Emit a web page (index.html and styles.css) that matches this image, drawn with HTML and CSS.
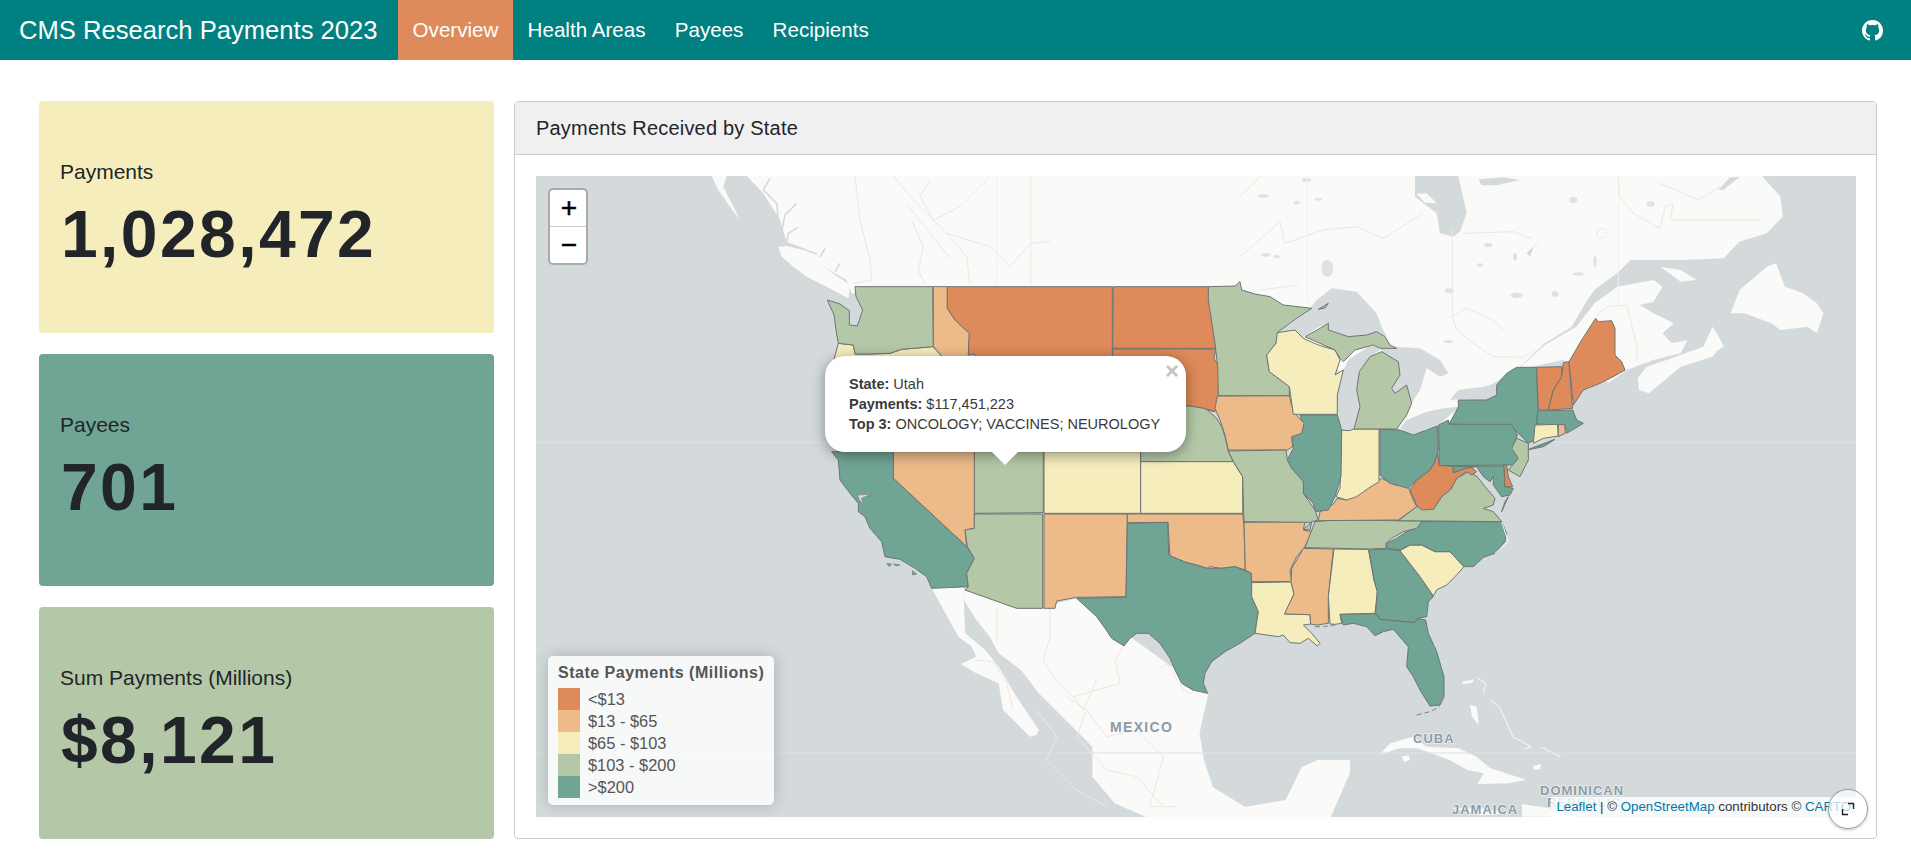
FILE: index.html
```html
<!DOCTYPE html>
<html lang="en">
    <head>
        <meta charset="UTF-8">
        <title>CMS Research Payments 2023</title>
        <link rel="stylesheet" href="styles.css">
    </head>
    <body>
        <nav class="navbar">
            <a class="brand" href="#">CMS Research Payments 2023</a>
            <a class="nav-link active" href="#">Overview</a>
            <a class="nav-link" href="#">Health Areas</a>
            <a class="nav-link" href="#">Payees</a>
            <a class="nav-link" href="#">Recipients</a>
            <a class="github" href="#" aria-label="GitHub">
                <svg viewBox="0 0 16 16" width="21" height="21"><path d="M8 0C3.58 0 0 3.58 0 8c0 3.54 2.29 6.53 5.47 7.59.4.07.55-.17.55-.38 0-.19-.01-.82-.01-1.49-2.01.37-2.53-.49-2.69-.94-.09-.23-.48-.94-.82-1.13-.28-.15-.68-.52-.01-.53.63-.01 1.08.58 1.23.82.72 1.21 1.87.87 2.33.66.07-.52.28-.87.51-1.07-1.78-.2-3.64-.89-3.64-3.95 0-.87.31-1.59.82-2.15-.08-.2-.36-1.02.08-2.12 0 0 .67-.21 2.2.82.64-.18 1.32-.27 2-.27.68 0 1.36.09 2 .27 1.53-1.04 2.2-.82 2.2-.82.44 1.1.16 1.92.08 2.12.51.56.82 1.27.82 2.15 0 3.07-1.87 3.75-3.65 3.95.29.25.54.73.54 1.48 0 1.07-.01 1.93-.01 2.2 0 .21.15.46.55.38A8.013 8.013 0 0016 8c0-4.42-3.58-8-8-8z"/></svg>
            </a>
        </nav>

        <main class="page">
            <section class="boxes">
                <div class="value-box box-yellow">
                    <p class="box-label">Payments</p>
                    <p class="box-value">1,028,472</p>
                </div>
                <div class="value-box box-teal">
                    <p class="box-label">Payees</p>
                    <p class="box-value">701</p>
                </div>
                <div class="value-box box-green">
                    <p class="box-label">Sum Payments (Millions)</p>
                    <p class="box-value">$8,121</p>
                </div>
            </section>

            <section class="card">
                <header class="card-header">Payments Received by State</header>
                <div class="card-body">
                    <div class="map">
                        <!-- all map coordinates are 3x page pixels -->
                        <svg class="map-svg" viewBox="1608 528 3960 1923" preserveAspectRatio="none">
                            <!-- land -->
                            <polygon class="land" points="2240,528 2290,580 2340,660 2360,725 2450,760 2470,800 2540,840 2555,880 3700,880 3900,1000 4200,1290 4330,1290 4400,1200 4560,1100 4566,1095 4634,1030 4715,980 4756,910 4783,870 4851,820 4892,780 5042,780 5171,775 5218,725 5300,700 5348,650 5341,590 5286,528"/>
                            <g transform="translate(1590,510)">
                                <polygon class="land" points="545,18 590,18 580,50 600,90 630,150 600,110 565,60"/>
                                <polygon class="land" points="745,230 770,228 820,240 870,258 880,290 960,345 955,385 890,350 830,320 790,290 755,260"/>
                                <polyline class="inlet" points="655,40 690,75"/>
                                <polyline class="inlet" points="720,25 700,60 740,100 745,150"/>
                                <polyline class="inlet" points="800,100 765,135 755,185"/>
                                <polyline class="inlet" points="805,172 775,190 770,215"/>
                                <polyline class="inlet" points="885,235 870,262"/>
                                <polyline class="inlet" points="930,280 915,305"/>
                            </g>
                            <g transform="translate(3600,510) scale(1.3605,1)">
                                <polygon class="land" points="700,600 760,525 830,470 870,400 920,350 1000,330 1020,350 1000,395 970,405 1000,430 1045,460 1020,490 1040,520 1075,510 1060,550 1000,570 960,590 940,600 900,640 880,600 800,570"/>
                                <polygon class="land" points="965,625 985,590 1040,565 1110,530 1150,525 1130,560 1060,590 990,670 968,660"/>
                                <polygon class="land" points="1110,530 1130,470 1140,490 1155,530 1130,550"/>
                                <polygon class="land" points="1015,290 1060,300 1095,330 1060,335"/>
                                <polygon class="land" points="1170,430 1190,360 1250,290 1270,280 1290,350 1330,370 1360,400 1375,430 1360,490 1340,470 1280,480 1260,460 1200,430"/>
                            </g>
                            <g transform="translate(1590,1320) scale(1.339,1)">
                                <polygon class="land" points="972,450 1090,505 1150,505 1180,490 1225,475 1520,760 1500,880 1510,960 1530,1041 1602,1101 1693,1080 1729,981 1765,960 1837,960 1837,999 1794,1131 1380,1131 1310,1090 1260,1010 1260,920 1140,760 1100,690 1050,640 1030,590 1000,540 972,480"/>
                                <polygon class="land" points="900,445 972,440 972,480 975,580 1020,630 1050,680 1085,760 1110,810 1140,870 1135,885 1120,890 1060,810 1050,730 1000,700 965,672 1000,650 990,620 960,590 935,530"/>
                            </g>
                            <g transform="translate(3600,1680) scale(1.3605,1)">
                                <polygon class="land" points="395,585 420,550 470,530 500,560 570,565 610,590 640,625 720,660 680,670 612,672 625,640 590,630 550,600 480,565 440,565"/>
                                <polygon class="land" points="445,590 460,585 463,600 450,605"/>
                                <polygon class="land" points="595,435 610,440 615,495 600,470"/>
                                <polygon class="land" points="578,365 605,358 600,368 580,372"/>
                                <polygon class="land" points="735,618 752,612 750,628 735,628"/>
                                <polygon class="land" points="555,745 620,745 685,760 620,766"/>
                                <polygon class="land" points="710,732 770,745 830,770 710,770"/>
                                <polyline class="reef" points="610,352 630,370 625,400"/>
                                <polyline class="reef" points="640,420 660,440 690,530 730,560 715,568"/>
                                <polyline class="reef" points="750,560 795,590"/>
                            </g>

                            <!-- tile seams -->
                            <line class="seam" x1="1608" y1="1326" x2="5568" y2="1326"/>
                            <line class="seam" x1="1608" y1="2259" x2="5568" y2="2259"/>

                            <!-- water on land -->
                            <g transform="translate(3720,510)">
                                <polygon class="water" points="525,18 655,18 680,130 660,185 640,200 600,190 590,130 525,80"/>
                                <polygon class="land" points="530,72 560,70 590,100 555,98"/>
                                <ellipse class="pond" cx="262" cy="295" rx="18" ry="26"/>
                                <polygon class="water" points="860,250 915,195 880,232 870,260"/>
                                <ellipse class="pond" cx="830" cy="376" rx="18" ry="8"/>
                                <ellipse class="pond" cx="628" cy="362" rx="14" ry="7"/>
                                <polygon class="water" points="715,28 790,22 840,30 770,46 725,46"/>
                                <ellipse class="pond" cx="1232" cy="102" rx="12" ry="8"/>
                                <polygon class="water" points="1435,60 1470,22 1500,20 1450,60"/>
                                <ellipse class="pond" cx="78" cy="255" rx="14" ry="5"/>
                                <ellipse class="pond" cx="110" cy="260" rx="10" ry="5"/>
                                <ellipse class="pond" cx="170" cy="98" rx="10" ry="5"/>
                                <ellipse class="pond" cx="235" cy="88" rx="12" ry="4"/>
                                <ellipse class="pond" cx="200" cy="30" rx="14" ry="6"/>
                                <ellipse class="pond" cx="70" cy="78" rx="16" ry="5"/>
                                <ellipse class="pond" cx="945" cy="372" rx="10" ry="9"/>
                                <ellipse class="pond" cx="745" cy="225" rx="12" ry="6"/>
                                <ellipse class="pond" cx="720" cy="285" rx="10" ry="5"/>
                                <ellipse class="pond" cx="825" cy="260" rx="6" ry="12"/>
                                <ellipse class="pond" cx="1065" cy="275" rx="5" ry="18"/>
                                <ellipse class="pond" cx="1015" cy="312" rx="16" ry="5"/>
                                <ellipse class="pond" cx="1000" cy="90" rx="12" ry="10"/>
                                <ellipse class="pond" cx="625" cy="515" rx="14" ry="4"/>
                                <circle class="ring" cx="1085" cy="190" r="15"/>
                                <polyline class="river" points="0,260 120,155 135,220 250,180 350,170 430,205 550,130"/>
                                <polyline class="river" points="670,190 820,185 875,205"/>
                                <polyline class="river" points="1255,40 1310,60 1375,90 1440,50"/>
                                <polyline class="river" points="60,360 175,345"/>
                                <polyline class="border" points="0,80 62,18"/>
                                <polyline class="faint" points="202,18 202,400"/>
                                <polyline class="faint" points="1135,18 1135,420"/>
                                <polyline class="border" points="637,180 637,440 650,480 700,520 760,560 850,562 885,540"/>
                                <polyline class="border" points="1135,18 1140,80 1180,130 1260,175 1275,110 1300,100 1290,150 1560,150"/>
                                <polyline class="border" points="1060,445 1100,410 1160,405 1190,525 1190,575"/>
                                <polyline class="river" points="635,440 680,415 760,450 790,480"/>
                            </g>
                            <g transform="translate(1590,510)">
                                <polyline class="river" points="975,18 990,150 1020,270 1025,330 970,340"/>
                                <polyline class="border" points="1090,18 1150,90 1250,190 1310,260 1320,345"/>
                                <polyline class="river" points="1130,100 1260,265"/>
                                <polyline class="river" points="1145,150 1180,230 1165,300 1185,345"/>
                                <polyline class="river" points="1200,30 1170,80 1210,150 1290,110 1380,20"/>
                                <polyline class="river" points="1250,190 1380,230 1440,290 1500,220 1560,215"/>
                                <polyline class="faint" points="1400,18 1400,345"/>
                                <polyline class="border" points="1502,18 1502,345"/>
                            </g>
                            <g transform="translate(3600,840)">
                                <polygon class="water" points="240,155 330,85 350,60 395,25 470,35 530,100 545,140 560,170 530,155 500,165 445,170 385,150 385,130 350,145 310,170 285,150"/>
                                <polygon class="water" points="410,345 430,270 445,240 505,200 530,195 540,210 510,230 478,275 470,330 480,380 460,430 440,450 425,450 412,400"/>
                                <polygon class="water" points="540,205 590,200 660,205 720,240 745,280 720,290 680,265 660,330 635,370 620,315 585,340 575,325 600,285 595,245 545,215"/>
                                <polygon class="water" points="600,445 635,460 712,438 780,380 730,385 680,395 620,420"/>
                                <polygon class="water" points="750,360 775,330 850,320 890,310 890,345 860,360 775,358"/>
                            </g>
                            <g transform="translate(2460,1410)">
                                <polyline class="border" points="690,415 690,500 670,570 700,620 760,680 900,640 885,570 910,528"/>
                                <polyline class="border" points="530,415 530,520"/>
                                <polyline class="border" points="465,570 520,575 560,640 580,720"/>
                                <polyline class="border" points="760,680 790,720 830,630"/>
                                <polyline class="border" points="1015,600 1040,580 1090,660 1115,670"/>
                            </g>
                            <g transform="translate(3200,1950)">
                                <polyline class="border" points="0,140 60,180 120,260 210,240 290,320 250,470 330,470"/>
                                <polyline class="border" points="60,180 30,260 120,360 210,380 290,470"/>
                                <polyline class="border" points="-90,180 -30,260 -60,330 30,420 120,470"/>
                            </g>

                            <!-- west -->
                            <g transform="translate(2460,840)">
                                <polygon class="st c3" points="55,190 100,195 105,222 150,222 210,220 245,208 338,200 365,228 355,300 355,400 30,400 25,300"/>
                                <polygon class="st c4" points="105,20 338,20 340,200 245,208 210,220 150,222 105,222 100,195 55,190 48,150 42,105 22,60 60,72 88,92 88,135 112,138 128,90 108,50"/>
                                <polygon class="st c2" points="340,20 382,20 382,85 405,120 448,160 445,225 460,222 480,235 480,400 355,400 365,228 340,200"/>
                                <polygon class="st c1" points="382,20 877,20 877,380 480,380 480,235 460,222 445,225 448,160 405,120 382,85"/>
                                <polygon class="st c1" points="880,20 1165,20 1170,80 1187,205 878,205"/>
                                <polygon class="st c1" points="878,207 1187,207 1182,235 1198,260 1198,360 1190,385 1185,395 1150,385 1110,378 878,378"/>
                                <polygon class="st c4" points="700,378 1110,378 1150,385 1185,395 1160,388 1190,415 1205,440 1215,470 1225,515 1240,545 962,545 962,515 700,515"/>
                                <polygon class="st c3" points="672,515 962,515 962,700 672,700"/>
                                <polygon class="st c3" points="962,545 1240,545 1255,570 1268,590 1268,700 962,700"/>
                                <polygon class="st c4" points="463,515 670,515 670,698 463,700"/>
                                <polygon class="st c2" points="220,515 463,515 463,745 435,750 440,800 220,595"/>
                                <polygon class="st c5" points="35,515 220,515 220,595 440,800 463,835 440,880 445,920 335,925 320,890 285,865 240,838 195,830 185,785 150,745 135,710 115,695 115,670 90,640 60,600 55,540"/>
                                <polygon class="bay" points="112,645 155,642 125,655 130,675 118,660"/>
                                <polygon class="st c4" points="463,702 668,702 668,985 590,985 435,930 445,920 440,880 463,835 442,800 435,750 463,745"/>
                                <polygon class="st c2" points="672,702 922,702 918,950 770,952 710,963 705,985 672,985"/>
                                <polygon class="st c5 thin" points="200,850 215,852 208,860"/>
                                <polygon class="st c5 thin" points="220,852 240,855 228,858"/>
                                <polygon class="st c5 thin" points="277,872 290,882 278,885"/>
                            </g>
                            <!-- south central -->
                            <g transform="translate(2460,1410)">
                                <polygon class="st c2" points="922,132 1268,132 1272,170 1276,300 1245,290 1205,295 1170,290 1160,295 1130,285 1100,278 1075,268 1050,258 1044,157 922,158"/>
                                <polygon class="st c5" points="922,160 1043,157 1046,255 1075,268 1100,278 1130,285 1160,295 1205,295 1245,290 1294,310 1295,380 1315,425 1305,490 1260,520 1215,545 1175,575 1155,610 1150,640 1163,670 1118,660 1085,640 1065,600 1050,565 1020,520 985,490 950,490 930,505 912,528 875,505 855,475 830,440 770,385 918,382"/>
                                <polygon class="st c2" points="1272,157 1455,155 1450,180 1475,185 1455,230 1430,260 1410,300 1415,335 1295,335 1294,310 1276,300"/>
                            </g>
                            <!-- south east -->
                            <g transform="translate(3660,1410)">
                                <polygon class="st c3" points="95,338 213,336 222,372 195,432 270,434 272,462 250,465 275,490 300,520 292,528 265,505 240,520 210,518 190,495 175,500 140,495 105,490 115,425 95,380"/>
                                <polygon class="st c2" points="250,235 340,237 325,380 325,460 290,465 272,462 270,434 193,432 222,372 213,335 215,295 235,262"/>
                                <polygon class="st c3" points="342,237 445,238 462,330 472,365 465,430 360,433 365,460 345,463 330,462 325,380"/>
                                <polygon class="st c5" points="447,240 500,237 540,242 600,320 640,380 625,395 620,440 592,445 585,458 480,448 467,430 472,365 462,330"/>
                                <polygon class="st c5" points="360,433 467,431 480,448 585,458 592,445 617,450 625,490 650,545 672,620 672,680 660,705 630,708 600,660 580,620 560,590 565,530 520,478 490,485 465,497 440,470 400,460 370,465"/>
                                <polygon class="st c3" points="540,242 570,225 605,225 645,245 690,245 732,290 705,320 680,345 650,360 640,378 600,320"/>
                                <polygon class="st c5" points="500,235 500,220 530,205 560,185 605,155 845,155 860,190 855,215 825,250 790,262 760,290 732,290 690,245 645,245 605,225 570,225 540,240"/>
                                <polygon class="st c4" points="255,233 285,155 340,150 607,153 590,175 550,185 515,205 498,220 498,235 445,237"/>
                                <polyline class="reef dash" points="285,470 310,470 345,465"/>
                                <polyline class="reef dash" points="590,735 630,725 660,710"/>
                                <polyline class="reef" points="845,155 865,215 825,250"/>
                            </g>
                            <!-- midwest and north east -->
                            <g transform="translate(3600,840)">
                                <polygon class="st c4" points="595,722 650,680 700,688 725,650 752,628 770,595 805,575 830,588 855,620 885,655 880,675 850,685 880,695 905,725"/>
                                <polygon class="st c2" points="355,722 360,695 400,672 412,655 440,660 500,625 545,595 585,615 625,620 635,650 650,680 595,720"/>
                                <polygon class="st c1" points="712,512 718,555 760,560 760,578 795,565 810,560 830,575 815,585 800,575 770,595 752,628 725,650 700,688 665,690 650,675 630,630 650,600 690,570 705,545"/>
                                <polygon class="st c5" points="540,448 600,450 640,465 712,438 715,510 705,545 690,570 650,600 625,625 600,618 570,610 540,585"/>
                                <polygon class="st c3" points="425,450 448,452 462,447 537,447 537,605 505,625 470,650 440,660 408,650 420,625"/>
                                <polygon class="st c5" points="300,405 412,405 425,450 423,590 405,650 385,690 345,695 340,670 310,640 310,605 275,565 262,540 280,505 275,465 312,440"/>
                                <polygon class="st c2" points="52,348 268,347 280,395 312,430 305,460 275,470 278,500 262,510 85,510 75,465 60,420 45,385"/>
                                <polygon class="st c4" points="85,513 258,510 262,540 275,565 310,605 310,640 345,690 355,720 335,725 330,750 310,748 335,727 132,725 128,590 100,545"/>
                                <polygon class="st c4" points="25,20 105,18 120,5 125,30 165,42 210,50 250,75 335,85 290,115 235,155 228,190 200,225 208,275 268,320 268,347 55,347 53,260 45,190 25,60"/>
                                <polygon class="st c3" points="232,158 285,150 310,175 355,195 405,210 420,240 405,285 430,270 412,345 412,403 280,403 268,320 208,275 200,225 228,190"/>
                                <polygon class="st c4" points="478,275 510,230 545,215 595,245 600,285 575,325 585,340 620,315 635,370 620,405 590,447 462,447 480,380 470,330"/>
                                <polygon class="st c4" points="315,170 360,145 385,130 385,150 445,170 500,165 530,155 555,170 570,195 590,205 540,205 520,195 465,210 430,245 420,235 405,210"/>
                                <polygon class="st c4" points="355,88 385,70 375,84"/>
                                <polygon class="st c5" points="950,262 1010,262 1012,330 1015,390 1003,480 985,490 975,480 935,440 748,432 775,380 775,360 860,360 890,345 890,315 920,280"/>
                                <polygon class="st c5" points="980,510 1065,478 1030,500"/>
                                <polygon class="st c5" points="716,435 745,420 748,433 935,433 952,465 940,505 955,535 935,555 718,557"/>
                                <polygon class="st c4" points="950,475 985,490 985,540 960,590 925,570 955,535 935,505"/>
                                <polygon class="st c1" points="1010,262 1085,260 1085,290 1060,330 1045,390 1015,390"/>
                                <polygon class="st c1" points="1090,248 1107,245 1115,360 1118,385 1045,390 1060,330 1085,290"/>
                                <polygon class="st c1" points="1187,115 1195,125 1235,122 1245,145 1245,225 1265,245 1275,270 1240,290 1200,310 1150,330 1120,375 1107,245 1145,180"/>
                                <polygon class="st c5" points="1013,393 1118,390 1130,420 1150,430 1125,445 1100,460 1095,435 1010,432"/>
                                <polygon class="st c3" points="1005,435 1072,433 1075,468 1030,475 1000,490"/>
                                <polygon class="st c2" points="1075,433 1095,435 1095,460 1075,470"/>
                                <polygon class="st c5" points="760,560 912,558 915,620 940,625 930,645 905,650 880,615 880,590 870,605 850,590 830,560 795,565 760,578"/>
                                <polygon class="st c1" points="912,555 920,555 925,590 938,620 915,620"/>
                                <polygon class="st c4" points="925,650 905,695 915,665"/>
                            </g>

                            <!-- place names -->
                            <text class="place" x="3330" y="2196">MEXICO</text>
                            <text class="place small" x="4239" y="2229">CUBA</text>
                            <text class="place small" x="4356" y="2442">JAMAICA</text>
                            <text class="place small" x="4620" y="2385">DOMINICAN</text>
                            <text class="place small" x="4641" y="2421">REPUBLIC</text>
                        </svg>

                        <div class="zoom-ctrl">
                            <button class="zoom-btn" type="button">+</button>
                            <button class="zoom-btn" type="button">&#x2212;</button>
                        </div>

                        <div class="popup">
                            <span class="popup-close">&#xd7;</span>
                            <div class="popup-text">
                                <b>State:</b> Utah<br>
                                <b>Payments:</b> $117,451,223<br>
                                <b>Top 3:</b> ONCOLOGY; VACCINES; NEUROLOGY
                            </div>
                            <div class="popup-tip"></div>
                        </div>

                        <div class="legend">
                            <h4 class="legend-title">State Payments (Millions)</h4>
                            <div class="legend-row"><i class="swatch c1"></i>&lt;$13</div>
                            <div class="legend-row"><i class="swatch c2"></i>$13 - $65</div>
                            <div class="legend-row"><i class="swatch c3"></i>$65 - $103</div>
                            <div class="legend-row"><i class="swatch c4"></i>$103 - $200</div>
                            <div class="legend-row"><i class="swatch c5"></i>&gt;$200</div>
                        </div>

                        <div class="attribution"><a href="#">Leaflet</a> | &copy; <a href="#">OpenStreetMap</a> contributors &copy; <a href="#">CARTO</a></div>
                    </div>
                    <button class="expand" type="button" aria-label="Expand">
                        <svg viewBox="0 0 14 14" width="14" height="14"><path d="M7 1.5h5.5V7M7 12.5H1.5V7"/></svg>
                    </button>
                </div>
            </section>
        </main>
    </body>
</html>
```

FILE: styles.css
```css
* {
    box-sizing: border-box;
}

body {
    margin: 0;
    background: #fff;
    color: #212529;
    font-family: "Liberation Sans", Arial, sans-serif;
    overflow: hidden;
}

a {
    text-decoration: none;
}

.navbar {
    display: flex;
    align-items: stretch;
    height: 60px;
    background: #008080;
    padding-left: 19px;
}

.brand {
    align-self: center;
    margin-right: 20.5px;
    font-size: 25.6px;
    color: #fff;
    white-space: nowrap;
}

.nav-link {
    display: flex;
    align-items: center;
    padding: 0 14.6px;
    font-size: 20.6px;
    color: #fff;
}

.nav-link.active {
    background: #de8a5a;
}

.github {
    display: flex;
    align-items: center;
    margin-left: auto;
    margin-right: 28px;
}

.github svg {
    fill: #fff;
}

.page {
    display: flex;
    gap: 20px;
    height: 779px;
    padding: 41px 34px 0 39px;
}

.boxes {
    display: flex;
    flex-direction: column;
    gap: 21px;
    width: 455px;
    flex: none;
}

.value-box {
    display: flex;
    flex-direction: column;
    justify-content: center;
    flex: 1;
    padding: 0 21px 3px;
    border-radius: 4px;
}

.box-yellow {
    background: #f6edbd;
}

.box-teal {
    background: #70a494;
}

.box-green {
    background: #b4c8a8;
}

.box-label {
    margin: 0;
    font-size: 21px;
    line-height: 24px;
}

.box-value {
    margin: 12px 0 0 1px;
    font-size: 66px;
    font-weight: 700;
    line-height: 76px;
    letter-spacing: 2.4px;
}

.card {
    display: flex;
    flex-direction: column;
    flex: 1;
    border: 1px solid #ccc;
    border-radius: 4px;
}

.card-header {
    padding: 0 21px;
    height: 53px;
    line-height: 52px;
    font-size: 20px;
    letter-spacing: .2px;
    background: #f0f0f0;
    border-bottom: 1px solid #ccc;
}

.card-body {
    position: relative;
    flex: 1;
    padding: 21px 20px 21px 21px;
}

.map {
    position: relative;
    height: 100%;
    overflow: hidden;
    background: #d4dadc;
}

.map-svg {
    position: absolute;
    top: 0;
    left: 0;
    width: 100%;
    height: 100%;
}

/* base map */
.land {
    fill: #fafaf8;
}

.water,
.pond {
    fill: #d4dadc;
}

.pond {
    opacity: .75;
}

.bay {
    fill: #d4dadc;
    stroke: #7f8885;
    stroke-width: .8;
    vector-effect: non-scaling-stroke;
}

.seam {
    stroke: #dde1e3;
    stroke-width: 1;
    vector-effect: non-scaling-stroke;
}

.river,
.border,
.faint,
.reef,
.ring,
.inlet {
    fill: none;
    vector-effect: non-scaling-stroke;
    stroke-width: 1;
}

.inlet {
    stroke: #d4dadc;
    stroke-width: 1.6;
}

.river,
.ring {
    stroke: #e6e9ea;
}

.border {
    stroke: #f3e4e4;
}

.faint {
    stroke: #f2f0ef;
}

.reef {
    stroke: #fafaf8;
}

.reef.dash {
    stroke: #7c8583;
    stroke-dasharray: 5 3;
}

.place {
    font-size: 42px;
    font-weight: 700;
    letter-spacing: 4px;
    fill: #8b9ba8;
    paint-order: stroke;
    stroke: #fafaf8;
    stroke-width: 3px;
}

.place.small {
    font-size: 39px;
    letter-spacing: 3px;
}

/* states */
.st {
    stroke: #6e7572;
    stroke-width: 1;
    stroke-linejoin: round;
    vector-effect: non-scaling-stroke;
}

.st.thin {
    stroke-width: .6;
}

.c1 {
    fill: #de8a5a;
    background: #de8a5a;
}

.c2 {
    fill: #edbb8a;
    background: #edbb8a;
}

.c3 {
    fill: #f6edbd;
    background: #f6edbd;
}

.c4 {
    fill: #b4c8a8;
    background: #b4c8a8;
}

.c5 {
    fill: #70a494;
    background: #70a494;
}

/* map controls */
.zoom-ctrl {
    position: absolute;
    top: 12px;
    left: 12px;
    display: flex;
    flex-direction: column;
    width: 40px;
    border: 2px solid #a8abac;
    border-radius: 5px;
    background: #fff;
}

.zoom-btn {
    height: 36px;
    padding: 0 0 0 2px;
    border: 0;
    background: none;
    font-family: "Liberation Sans", Arial, sans-serif;
    font-size: 28px;
    line-height: 34px;
    font-weight: 400;
    -webkit-text-stroke: .5px #000;
    color: #000;
}

.zoom-btn + .zoom-btn {
    height: 37px;
    border-top: 1px solid #ccc;
}

.popup {
    position: absolute;
    top: 180px;
    left: 289px;
    width: 361px;
    height: 96px;
    padding: 18px 24px;
    background: #fff;
    border-radius: 20px;
    box-shadow: 0 3px 14px rgba(0, 0, 0, .4);
    color: #3a3a3a;
    font-size: 14.5px;
    line-height: 20px;
    white-space: nowrap;
}

.popup-close {
    position: absolute;
    top: 5px;
    right: 7px;
    font-size: 24px;
    line-height: 20px;
    font-weight: 700;
    color: #c3c3c3;
}

.popup-tip {
    position: absolute;
    left: 167px;
    bottom: -13px;
    width: 0;
    height: 0;
    border-left: 13px solid transparent;
    border-right: 13px solid transparent;
    border-top: 13px solid #fff;
}

.legend {
    position: absolute;
    left: 12px;
    bottom: 12px;
    width: 226px;
    padding: 8px 10px 7px;
    background: rgba(255, 255, 255, .8);
    border-radius: 5px;
    box-shadow: 0 0 15px rgba(0, 0, 0, .2);
    color: #555;
    font-size: 16.4px;
}

.legend-title {
    margin: 0 0 6px;
    font-size: 16px;
    line-height: 18px;
    letter-spacing: .5px;
    white-space: nowrap;
}

.legend-row {
    display: flex;
    align-items: center;
    gap: 8px;
    height: 22px;
}

.swatch {
    display: block;
    width: 22px;
    height: 22px;
}

.attribution {
    position: absolute;
    right: 0;
    bottom: 0;
    padding: 0 5px;
    height: 20px;
    line-height: 20px;
    background: rgba(255, 255, 255, .8);
    color: #333;
    font-size: 13.3px;
    white-space: nowrap;
}

.attribution a {
    color: #0078a8;
}

.expand {
    position: absolute;
    right: 8px;
    bottom: 9px;
    display: flex;
    align-items: center;
    justify-content: center;
    width: 40px;
    height: 40px;
    padding: 0;
    border: 1px solid #999;
    border-radius: 50%;
    background: rgba(255, 255, 255, .7);
    box-shadow: 0 1px 3px rgba(0, 0, 0, .25);
}

.expand svg path {
    fill: none;
    stroke: #222;
    stroke-width: 1.4;
}
```
